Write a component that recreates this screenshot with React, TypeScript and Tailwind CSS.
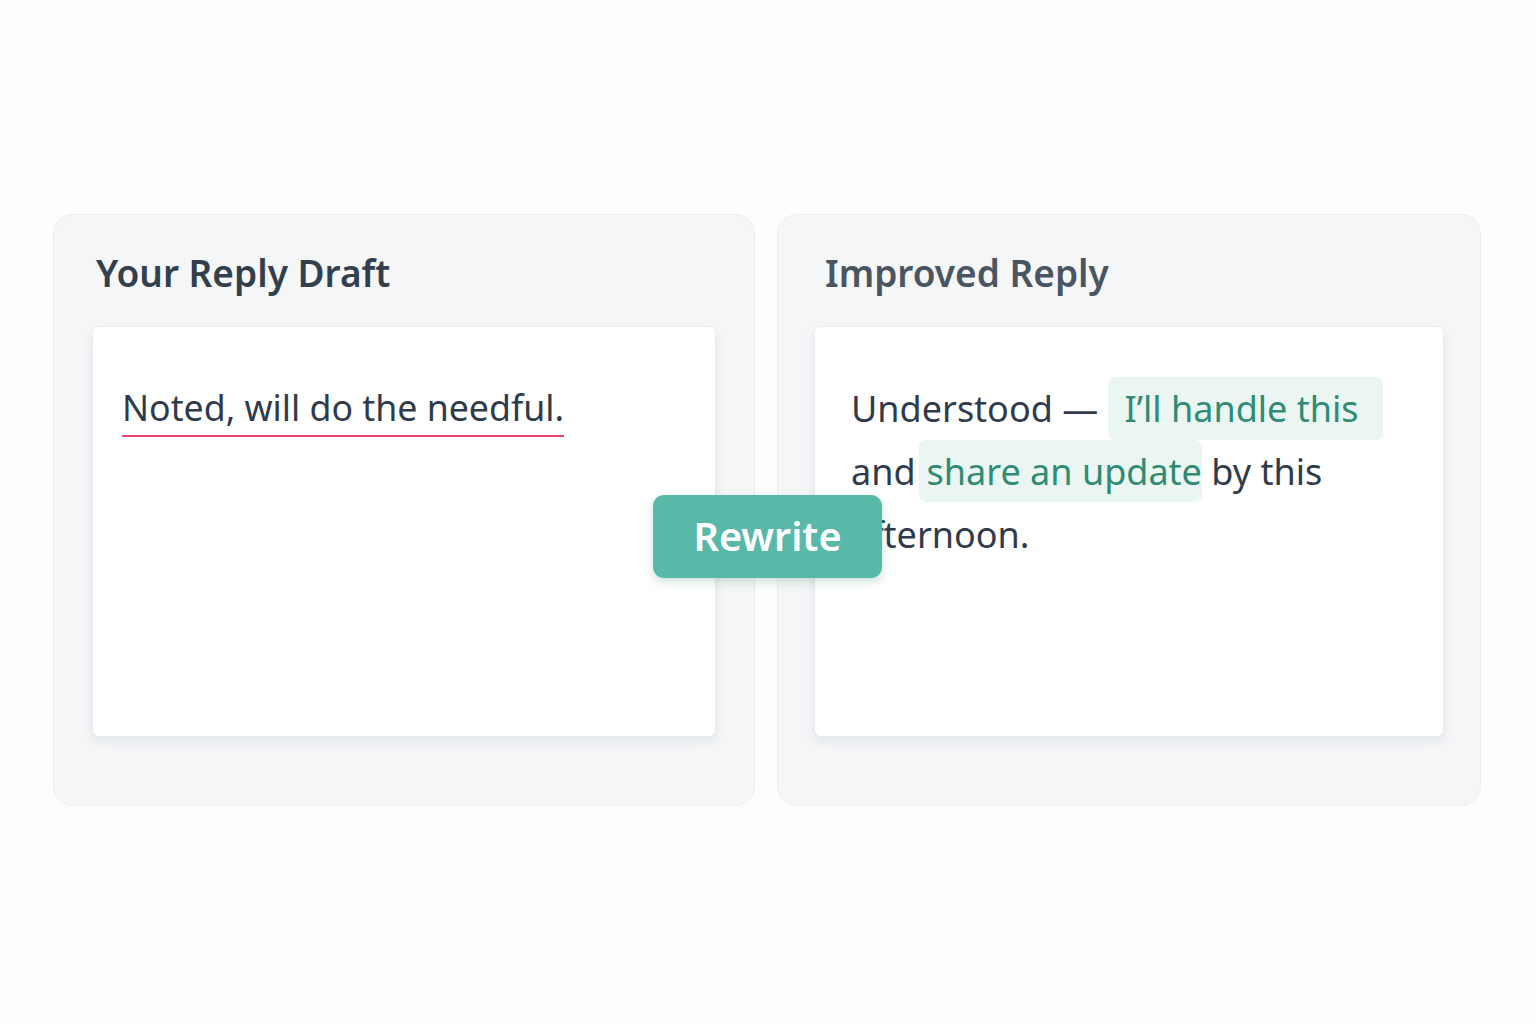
import React from "react";

export default function App() {
  const font = { fontFamily: '"Noto Sans", "Open Sans", sans-serif' };
  return (
    <div className="min-h-screen w-full bg-[#fdfdfd]" style={font}>
      <div className="relative flex gap-[22px] pl-[53px] pr-[55px] pt-[214px]">
        {/* Left card */}
        <div className="flex h-[592px] w-[702px] flex-col rounded-[20px] border border-[#eceef1] bg-[#f5f6f7] px-[38px]">
          <h2 className="mt-[33px] h-[78px] pl-[4px] text-[37px] font-semibold leading-[50px] text-[#333f4d]">
            Your Reply Draft
          </h2>
          <div className="h-[411px] rounded-[7px] border border-[#e9ebee] bg-white px-[29px] pt-[60px] shadow-[0_5px_10px_rgba(148,163,184,0.2)]">
            <span className="inline-block border-b-2 border-[#e8466d] pb-[8px] text-[35.7px] leading-[40px] text-[#2f3b4b]">
              Noted, will do the needful.
            </span>
          </div>
        </div>

        {/* Right card */}
        <div className="flex h-[592px] w-[704px] flex-col rounded-[20px] border border-[#eceef1] bg-[#f5f6f7] px-[36px]">
          <h2 className="mt-[33px] h-[78px] pl-[11px] text-[37px] font-semibold leading-[50px] text-[#4a5563]">
            Improved Reply
          </h2>
          <div className="h-[411px] rounded-[7px] border border-[#e9ebee] bg-white pl-[36px] pt-[50px] shadow-[0_5px_10px_rgba(148,163,184,0.2)]">
            <p className="text-[36px] leading-[63px] text-[#2f3b4b]">
              Understood —{" "}
              <span className="inline-block h-[63px] rounded-[7px] bg-[#ebf6f2] pl-[17px] pr-[24px] text-[#2f8b74]">
                I’ll handle this
              </span>
              <br />
              and
              <span className="ml-[3px] inline-block h-[62px] rounded-[7px] bg-[#ebf6f2] pl-[8px] pr-0 text-[#2f8b74]">
                share an update
              </span>{" "}
              by this
              <br />
              afternoon.
            </p>
          </div>
        </div>

        {/* Rewrite button */}
        <button className="absolute left-[653px] top-[495px] flex h-[83px] w-[229px] items-center justify-center rounded-[11px] bg-[#59b9a8] text-[39.5px] font-semibold text-white shadow-[0_4px_10px_rgba(60,140,125,0.25)]">
          Rewrite
        </button>
      </div>
    </div>
  );
}
